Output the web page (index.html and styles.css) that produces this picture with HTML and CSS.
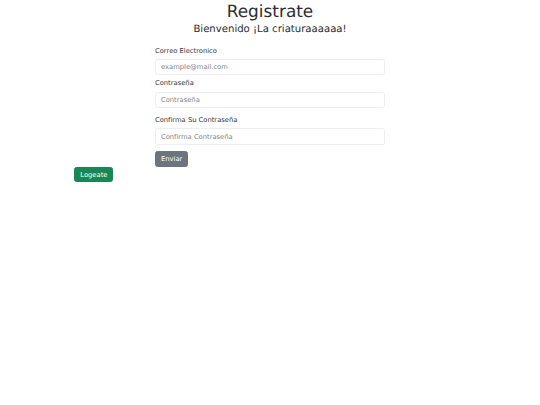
FILE: index.html
```html
<!DOCTYPE html>
<html lang="es">
<head>
<meta charset="utf-8">
<title>Registrate</title>
<link rel="stylesheet" href="styles.css">
</head>
<body>
<header class="head">
  <h1 class="title">Registrate</h1>
  <h4 class="subtitle">Bienvenido ¡La criaturaaaaaa!</h4>
</header>
<form class="form">
  <div class="field field-tight">
    <label class="label" for="email">Correo Electronico</label>
    <input class="input" id="email" type="email" placeholder="example@mail.com">
  </div>
  <div class="field">
    <label class="label" for="pass">Contraseña</label>
    <input class="input" id="pass" type="password" placeholder="Contraseña">
  </div>
  <div class="field field-last">
    <label class="label" for="pass2">Confirma Su Contraseña</label>
    <input class="input" id="pass2" type="password" placeholder="Confirma Contraseña">
  </div>
  <button class="btn btn-secondary" type="button">Enviar</button>
</form>
<div class="login-row">
  <button class="btn btn-success" type="button">Logeate</button>
</div>
</body>
</html>
```

FILE: styles.css
```css
html, body {
  margin: 0;
  padding: 0;
  background: #ffffff;
}
body {
  font-family: "DejaVu Sans", "Noto Sans", sans-serif;
  font-size: 6.75px;
  line-height: 1.5;
  color: #2a2e33;
  text-rendering: geometricPrecision;
}
.head {
  text-align: center;
}
.title {
  font-size: 16.9px;
  font-weight: 500;
  line-height: 1.2;
  margin: 0 0 3.4px;
  padding-top: 0.5px;
}
.subtitle {
  font-size: 10.125px;
  font-weight: 500;
  line-height: 1.2;
  margin: 0 0 3.4px;
}
.form {
  width: 230px;
  margin: 9.2px auto 0;
}
.field {
  margin-bottom: 6.8px;
}
.field-tight {
  margin-bottom: 3px;
}
.field-last {
  margin-bottom: 6px;
}
.label {
  display: block;
  margin-bottom: 3.4px;
  color: #34383c;
}
.input {
  display: block;
  box-sizing: border-box;
  width: 100%;
  height: 16.3px;
  padding: 2.5px 5px;
  margin: 0;
  font-family: inherit;
  font-size: 6.75px;
  line-height: 1.5;
  color: #212529;
  background: #ffffff;
  border: 1px solid #eceef0;
  border-radius: 2.5px;
  outline: none;
  text-rendering: geometricPrecision;
}
.input::placeholder {
  color: #80858a;
}
.btn {
  display: inline-block;
  box-sizing: border-box;
  height: 15.8px;
  padding: 2.5px 5px;
  margin: 0;
  font-family: inherit;
  font-size: 6.75px;
  line-height: 1.5;
  color: #ffffff;
  border: 0.5px solid transparent;
  border-radius: 2.5px;
  cursor: pointer;
  text-rendering: geometricPrecision;
}
.btn-secondary {
  background: #6c757d;
  border-color: #6c757d;
}
.btn-success {
  background: #198754;
  border-color: #198754;
}
.login-row {
  padding-left: 74.3px;
}
```
